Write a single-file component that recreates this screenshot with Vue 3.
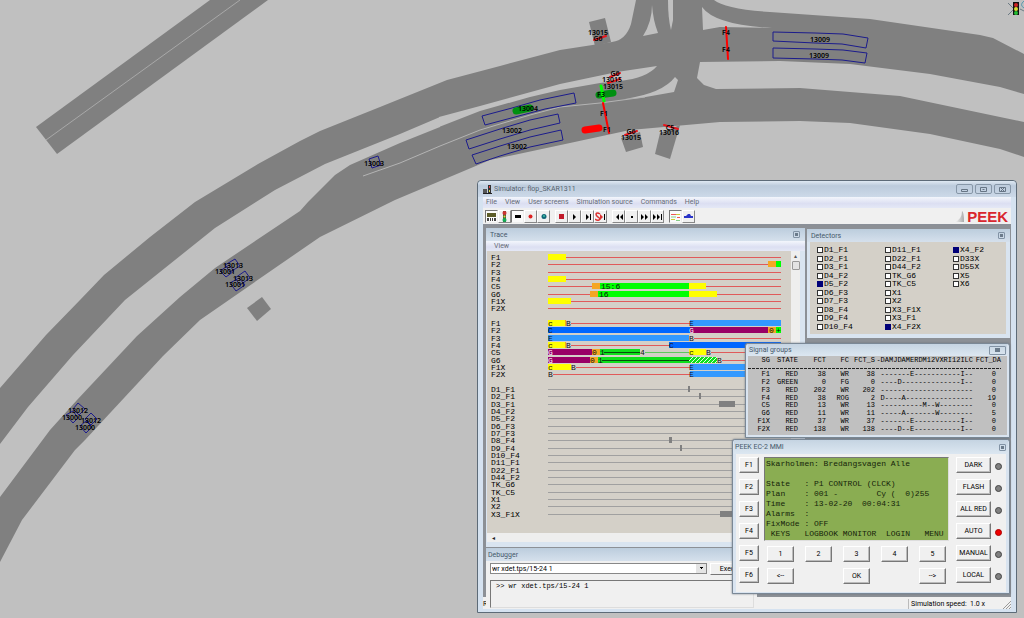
<script setup>
import { ref } from 'vue'

const menu = ['File', 'View', 'User screens', 'Simulation source', 'Commands', 'Help']

const tools = [
  [
    { id: 'panel', on: true },
    { id: 'lights' },
    { id: 'detector', on: true },
    { id: 'record' },
    { id: 'globe' }
  ],
  [{ id: 'stop' }, { id: 'play' }, { id: 'step' }, { id: 'skip' }],
  [{ id: 'rewind' }, { id: 'dot' }, { id: 'forward' }, { id: 'end' }],
  [{ id: 'trace', on: true }, { id: 'car' }]
]

const areas = [
  '773,32 815,33 843,34 868,38 866,48 842,44 815,43 773,41',
  '773,48 815,49 843,50 867,53 865,63 842,60 815,59 773,58',
  '482,116 512,108 540,100 574,93 576,103 545,109 515,117 485,125',
  '466,140 500,129 530,120 558,114 560,123 530,130 500,139 469,149',
  '472,155 500,146 530,137 561,130 563,140 530,147 500,156 476,164',
  '369,159 378,156 381,165 372,168',
  '225,265 235,259 240,266 230,272',
  '220,271 229,265 234,271 226,277',
  '235,278 245,271 250,278 240,285',
  '230,283 239,278 245,285 236,291',
  '73,409 78,403 85,409 79,415',
  '66,415 73,411 78,418 73,423',
  '85,419 91,413 97,419 91,425',
  '80,426 86,421 92,427 86,433'
]

const labels = [
  ['13009', 820, 42], ['13009', 819, 58], ['13015', 598, 35], ['13015', 612, 82],
  ['13015', 613, 89], ['13015', 631, 140], ['13016', 669, 135], ['13004', 528, 111],
  ['13002', 512, 133], ['13002', 517, 149], ['13003', 374, 166], ['13013', 233, 268],
  ['13001', 225, 274], ['13013', 243, 281], ['13001', 235, 287], ['13012', 78, 413],
  ['13000', 72, 420], ['13012', 91, 423], ['13000', 85, 430], ['G6', 598, 41],
  ['G6', 615, 76], ['G6', 631, 134], ['C5', 670, 130], ['F4', 726, 35],
  ['F4', 726, 52], ['F1', 604, 116], ['F1', 607, 132], ['F3', 601, 97]
]

// trace rows: bars are [from, to, colour], marks are [text, x, colour]
const Y = '#ffff00'
const O = '#f5a623'
const G = '#00ff00'
const DG = '#0de01b'
const M = '#990066'
const B1 = '#0066ff'
const B2 = '#3399ff'

const traceRows = [
  { name: 'F1', bars: [[61, 79, Y]] },
  { name: 'F2', bars: [[281, 289, O], [289, 294, G]] },
  { name: 'F3' },
  { name: 'F4', bars: [[61, 79, Y]] },
  { name: 'C5', bars: [[105, 113, O], [113, 202, G], [202, 219, Y]], marks: [['15:6', 114]] },
  { name: 'G6', bars: [[103, 111, O], [111, 202, G], [202, 230, Y]], marks: [['16', 112]] },
  { name: 'F1X', bars: [[61, 84, Y]] },
  { name: 'F2X' },
  null,
  { name: 'F1', bars: [[61, 78, Y], [78, 80, O], [203, 294, B2]], marks: [['c', 61], ['B', 79], ['E', 202]] },
  { name: 'F2', bars: [[61, 203, B1], [203, 281, M], [281, 289, O], [289, 294, G]], marks: [['C', 61], ['G', 202, '#fff'], ['0', 282], ['+', 289]] },
  { name: 'F3', bars: [[61, 202, B2]], marks: [['E', 61], ['B', 202]] },
  { name: 'F4', bars: [[61, 78, Y], [78, 80, O], [182, 294, B1]], marks: [['c', 61], ['B', 79], ['C', 182]] },
  { name: 'C5', bars: [[61, 105, M], [105, 113, O], [113, 153, DG], [202, 219, Y], [219, 221, O]], core: [117, 153], thin: [158, 202], marks: [['G', 61, '#fff'], ['0', 105], ['1', 113], ['4', 153], ['c', 202], ['B', 219]] },
  { name: 'G6', bars: [[61, 103, M], [103, 111, O], [111, 202, DG], [202, 230, 'url(#hatch)']], core: [115, 202], marks: [['G', 61, '#fff'], ['0', 103], ['1', 111], ['B', 230]] },
  { name: 'F1X', bars: [[61, 84, Y], [84, 86, O], [203, 294, B2]], marks: [['c', 61], ['B', 84], ['E', 202]] },
  { name: 'F2X', bars: [[203, 294, B2]], marks: [['B', 61], ['E', 202]] },
  null,
  { name: 'D1_F1', pulse: [201, 203] },
  { name: 'D2_F1', pulse: [212, 214] },
  { name: 'D3_F1', pulse: [232, 248] },
  { name: 'D4_F2', pulse: [] },
  { name: 'D5_F2', pulse: [] },
  { name: 'D6_F3', pulse: [] },
  { name: 'D7_F3', pulse: [] },
  { name: 'D8_F4', pulse: [182, 185] },
  { name: 'D9_F4', pulse: [193, 195] },
  { name: 'D10_F4', pulse: [] },
  { name: 'D11_F1', pulse: [] },
  { name: 'D22_F1', pulse: [] },
  { name: 'D44_F2', pulse: [] },
  { name: 'TK_G6', pulse: [] },
  { name: 'TK_C5', pulse: [] },
  { name: 'X1', pulse: [] },
  { name: 'X2', pulse: [] },
  { name: 'X3_F1X', pulse: [233, 260] }
]
  .map((row, i) => row && { ...row, y: Math.round((i * 22) / 3) + 6 })
  .filter(Boolean)

const detectors = ref(
  [
    'D1_F1', 'D2_F1', 'D3_F1', 'D4_F2', 'D5_F2', 'D6_F3', 'D7_F3', 'D8_F4', 'D9_F4', 'D10_F4',
    'D11_F1', 'D22_F1', 'D44_F2', 'TK_G6', 'TK_C5', 'X1', 'X2', 'X3_F1X', 'X3_F1', 'X4_F2X',
    'X4_F2', 'D33X', 'D55X', 'X5', 'X6'
  ].map(name => ({ name, on: ['D5_F2', 'X4_F2X', 'X4_F2'].includes(name) }))
)

const groups = [
  ['F1', 'RED', 38, 'WR', 38, '-------E-----------I--', 0],
  ['F2', 'GREEN', 0, 'FG', 0, '----D--------------I--', 0],
  ['F3', 'RED', 202, 'WR', 202, '----------------------', 0],
  ['F4', 'RED', 38, 'ROG', 2, 'D----A----------------', 19],
  ['C5', 'RED', 13, 'WR', 13, '----------M--W--------', 0],
  ['G6', 'RED', 11, 'WR', 11, '-----A-------W--------', 5],
  ['F1X', 'RED', 37, 'WR', 37, '-------E-----------I--', 0],
  ['F2X', 'RED', 138, 'WR', 138, '----D--E-----------I--', 0]
]

const lcd = [
  'Skarholmen: Bredangsvagen Alle',
  '',
  'State   : P1 CONTROL (CLCK)',
  'Plan    : 001 -        Cy (  0)255',
  'Time    : 13-02-20  00:04:31',
  'Alarms  :',
  'FixMode : OFF',
  ' KEYS   LOGBOOK MONITOR  LOGIN   MENU'
].join('\n')

const modes = ['DARK', 'FLASH', 'ALL RED', 'AUTO', 'MANUAL', 'LOCAL']
const command = ref('wr xdet.tps/15-24 1')
</script>

<template>
  <main class="desktop">
    <svg class="map" viewBox="0 0 1024 618" preserveAspectRatio="xMinYMin slice">
      <g fill="#808080">
        <polygon points="210,0 268,0 57,154 36,127" />
        <!-- outer carriageway -->
        <path d="M0,388 46,335 80,300 104,275 150,237 195,202 258,164 300,141 320,131 380,107 447,80 500,66 560,50 612,42 Q626,40 631,24 L636,0 714,0 Q725,9 770,12 L870,19 980,35 993,38 1024,54 1024,157 1000,149 930,134 850,123 800,121 720,122 630,130 570,143 490,160 395,200 320,237 275,268 200,320 163,356 85,440 75,450 22,520 0,562 V497 L50,430 77,400 137,336 180,297 215,268 300,211 308,202 335,175 350,165 400,143 440,127 440,117 400,134 325,164 275,190 215,228 125,300 73,355 28,407 0,444Z" />
        <polygon points="589,22 605,18 611,42 595,46" />
        <polygon points="621,138 640,132 643,147 626,152" />
        <polygon points="660,133 680,125 670,159 655,154" />
        <polygon points="247,308 262,297 271,309 257,321" />
      </g>
      <g fill="#c0c0c0">
        <path d="M439,117 480,106 560,84 617,72 657,66 Q647,78 620,81 L600,83 560,90 530,97 480,111 439,127Z" />
        <path d="M625,99 Q663,93 675,77 L678,80 674,92 640,98Z" />
        <path d="M700,62 780,61 850,64 930,74 1000,87 1024,94 1024,122 1000,117 900,96 800,88 716,89 704,85 697,78Z" />
        <path d="M702,7 Q715,25 772,28 L720,27 703,30Z" />
        <path d="M652,5 Q652,22 643,36 L658,33 Q653,20 652,5Z" />
        <path d="M668,0 H673 V20 L671,30 Q668,18 668,0Z" />
      </g>
      <path d="M240,0 46,140" stroke="#a8a8a8" fill="none" />
      <path d="M363,176 400,163 440,146 480,130 530,115 560,107 600,103 645,97" stroke="#b4b4b4" fill="none" />
      <polygon v-for="(a, i) in areas" :key="i" :points="a" fill="none" stroke="#1c1c8c" stroke-width="1" />
      <g fill="none" stroke-linecap="round">
        <path d="M516,111 530,108M599,95 613,93" stroke="#009010" stroke-width="7" />
        <path d="M585,130 599,128" stroke="#f00" stroke-width="7" />
        <path d="M601,86 604,101" stroke="#0f0" stroke-width="3" />
        <path d="M603,103 609,133M726,27 728,59" stroke="#f00" stroke-width="2" />
        <path d="M594,40 606,36M610,77 620,73M608,83 620,79M625,135 637,131M664,125 678,129" stroke="#e8141c" stroke-width="2" />
      </g>
      <text v-for="(l, i) in labels" :key="i" :x="l[1]" :y="l[2]" class="map-label">{{ l[0] }}</text>
      <g>
        <path d="M1008,3 1014,9M1014,9 1008,15M1020,9 1024,11" stroke="#6c7b84" stroke-width="1" />
        <path d="M1024,1 Q1019,5 1024,8" stroke="#5a98b0" fill="none" />
        <rect x="1013" y="2" width="6" height="13" fill="#111" />
        <circle cx="1016" cy="5" r="2" fill="#c22" />
        <circle cx="1016" cy="9" r="2" fill="#dd3" />
        <circle cx="1016" cy="13" r="2" fill="#2b3" />
      </g>
    </svg>

    <section class="simulator">
      <header class="title">
        <svg width="9" height="9" viewBox="0 0 9 9">
          <path d="M0,4h4v4h-4z" fill="#555" /><path d="M0,8h9v1H0z" fill="#222" /><path d="M5,0h3v8h-3z" fill="#333" /><path d="M6,1h1v2h-1z" fill="#e44" /><path d="M6,5h1v2h-1z" fill="#dd4" />
        </svg>
        <h1>Simulator: flop_SKAR1311</h1>
        <div class="controls">
          <button aria-label="Minimize"><svg viewBox="0 0 9 7"><path d="M1.500,3.500h6v2h-6z" /></svg></button>
          <button aria-label="Maximize"><svg viewBox="0 0 9 7"><path d="M1.500,1.500h6v4h-6zM3.500,3.500h2" /></svg></button>
          <button aria-label="Close"><svg viewBox="0 0 9 7"><path d="M1.500,1.500h6v4h-6zM3,2l3,3M6,2l-3,3" /></svg></button>
        </div>
      </header>
      <nav class="menu">
        <a v-for="m in menu" :key="m" href="#">{{ m }}</a>
      </nav>
      <div class="toolbar">
        <div v-for="(group, g) in tools" :key="g" class="tool-group">
          <button v-for="t in group" :key="t.id" :class="{ on: t.on }" :aria-label="t.id">
            <svg width="11" height="11" viewBox="0 0 11 11">
              <template v-if="t.id === 'panel'">
                <path d="M1,2h9v4h-9z" fill="#5c5c28" />
                <path d="M1,7h2v3h-2zM4,7h1v3h-1zM6,7h1v3h-1zM8,7h2v3h-2z" fill="#444" />
              </template>
              <template v-else-if="t.id === 'lights'">
                <path d="M4,0h3v11h-3z" fill="#4b5b3a" />
                <circle cx="5.500" cy="2" r="2" fill="#c33" /><circle cx="5.500" cy="5.500" r="1" fill="#dd3" /><circle cx="5.500" cy="9" r="2" fill="#1a5" />
              </template>
              <path v-else-if="t.id === 'detector'" d="M3,4h6v3h-6z" />
              <circle v-else-if="t.id === 'record'" cx="5.500" cy="5.500" r="2" fill="#d22" />
              <template v-else-if="t.id === 'globe'">
                <circle cx="6" cy="5.500" r="2.500" fill="#167" /><path d="M5,4h2v2h-2z" fill="#3a9" />
              </template>
              <path v-else-if="t.id === 'stop'" d="M3,3h5v5h-5z" fill="#c11a2a" />
              <path v-else-if="t.id === 'play'" d="M4,3l3,3-3,3z" />
              <path v-else-if="t.id === 'step'" d="M4,3l3,3-3,3zM8,3h1v6h-1z" />
              <template v-else-if="t.id === 'skip'">
                <path d="M5,3q-3,-2 -4,0q0,2 2,3q3,2 1,3q-2,1 -4,-1" fill="none" stroke="#d33" stroke-width="1.500" />
                <path d="M5,3l3,3-3,3z" fill="#d33" /><path d="M9,3h1v6h-1z" />
              </template>
              <path v-else-if="t.id === 'rewind'" d="M6,3v6l-3,-3zM10,3v6l-3,-3z" />
              <path v-else-if="t.id === 'dot'" d="M5,5h2v2h-2z" />
              <path v-else-if="t.id === 'forward'" d="M2,3l3,3-3,3zM6,3l3,3-3,3z" />
              <path v-else-if="t.id === 'end'" d="M1,3l3,3-3,3zM5,3l3,3-3,3zM9,3h1v6h-1z" />
              <template v-else-if="t.id === 'trace'">
                <path d="M1,3.500h5M7,6.500h3" stroke="#e55" /><path d="M6,3.500h4M1,8.500h4" stroke="#cc3" /><path d="M1,6h5M6,9.500h4" stroke="#8c8" />
              </template>
              <path v-else d="M1,7v-2h2l2,-2h2l1,2h2v2z" fill="#2a35c8" />
            </svg>
          </button>
        </div>
        <div class="brand">
          <svg width="10" height="12" viewBox="0 0 10 12">
            <defs>
              <linearGradient id="swoosh"><stop offset="0" stop-color="#fff" /><stop offset="1" stop-color="#aaa" /></linearGradient>
            </defs>
            <path d="M0,1H8Q10,2 10,12H0Q8,10 8,1z" fill="url(#swoosh)" />
          </svg>
          <strong>PEEK</strong>
        </div>
      </div>

      <div class="mdi">
        <section class="child trace">
          <header><h2>Trace</h2><button class="box" aria-label="Close trace"></button></header>
          <nav class="menu sub"><a href="#">View</a></nav>
          <div class="trace-body">
            <svg class="chart" width="300" height="282">
              <defs>
                <pattern id="hatch" width="4" height="4" patternUnits="userSpaceOnUse">
                  <rect width="4" height="4" fill="#0de01b" />
                  <path d="M-1,5 5,-1" stroke="#dfffdf" stroke-width="1" />
                </pattern>
              </defs>
              <g v-for="r in traceRows" :key="r.y">
                <text x="4" :y="r.y + 3">{{ r.name }}</text>
                <template v-if="r.pulse">
                  <rect x="61" :y="r.y" width="233" height="1" fill="#a0a0a0" />
                  <rect v-if="r.pulse.length" :x="r.pulse[0]" :y="r.y - 3" :width="r.pulse[1] - r.pulse[0]" height="6" fill="#808080" />
                </template>
                <template v-else>
                  <rect x="61" :y="r.y" width="233" height="1" fill="#e05a5a" />
                  <rect v-for="(b, i) in r.bars" :key="i" :x="b[0]" :y="r.y - 3" :width="b[1] - b[0]" height="6" :fill="b[2]" />
                  <rect v-if="r.core" :x="r.core[0]" :y="r.y" :width="r.core[1] - r.core[0]" height="1" fill="#0a4a10" />
                  <rect v-if="r.thin" :x="r.thin[0]" :y="r.y" :width="r.thin[1] - r.thin[0]" height="1" fill="#5fc85f" />
                  <template v-for="m in r.marks" :key="m[1]">
                    <rect v-if="m[0] === 'B' || m[0] === '4'" :x="m[1]" :y="r.y - 3" width="5" height="7" fill="#d4d0c8" />
                    <text :x="m[1]" :y="r.y + 3" :fill="m[2] || '#111'">{{ m[0] }}</text>
                  </template>
                </template>
              </g>
            </svg>
            <div class="vscroll"><i>▴</i><b></b></div>
          </div>
          <div class="hscroll">◂</div>
        </section>

        <section class="child detectors">
          <header><h2>Detectors</h2><button class="box" aria-label="Close detectors"></button></header>
          <div class="detector-list">
            <label v-for="d in detectors" :key="d.name"><input v-model="d.on" type="checkbox">{{ d.name }}</label>
          </div>
        </section>

        <section class="child debugger">
          <header><h2>Debugger</h2></header>
          <div class="command">
            <select v-model="command" aria-label="Command"><option>wr xdet.tps/15-24 1</option></select>
            <button>Execute</button>
          </div>
          <textarea readonly aria-label="Output" value="&gt;&gt; wr xdet.tps/15-24 1"></textarea>
        </section>

        <section class="child floating signals">
          <header><h2>Signal groups</h2><button class="box wide" aria-label="Close signal groups"></button></header>
          <div class="signal-body">
            <table>
              <thead>
                <tr><th>SG</th><th>STATE</th><th>FCT</th><th>FC</th><th>FCT_S</th><th>-DAMJDAMERDM12VXRI12ILC</th><th>FCT_DA</th></tr>
              </thead>
              <tbody>
                <tr v-for="g in groups" :key="g[0]"><td v-for="(c, i) in g" :key="i">{{ c }}</td></tr>
              </tbody>
            </table>
          </div>
        </section>

        <section class="child floating mmi">
          <header><h2>PEEK EC-2 MMI</h2><button class="box" aria-label="Close MMI"></button></header>
          <div class="mmi-body">
            <div class="keys">
              <button v-for="n in 6" :key="n">F{{ n }}</button>
            </div>
            <div class="center">
              <pre class="lcd">{{ lcd }}</pre>
              <div class="pad">
                <button v-for="n in 5" :key="n">{{ n }}</button>
                <button>&lt;--</button>
                <button class="ok">OK</button>
                <button class="next">--&gt;</button>
              </div>
            </div>
            <div class="modes">
              <template v-for="m in modes" :key="m">
                <button>{{ m }}</button>
                <i :class="{ lit: m === 'AUTO' }"></i>
              </template>
            </div>
          </div>
        </section>
      </div>

      <footer class="status">
        <span>Ready</span>
        <p>Simulation speed: &nbsp;1.0 x</p>
        <svg width="8" height="8" viewBox="0 0 8 8"><path d="M0,8 8,0M3,8 8,3M6,8 8,6" stroke="#999" /></svg>
      </footer>
    </section>
  </main>
</template>

<style>
body {
  background: #c0c0c0;
}
</style>

<style scoped>
* {
  box-sizing: border-box;
}

.desktop {
  position: relative;
  min-height: 100vh;
  overflow: hidden;
  background: #c0c0c0;
  font-family: Roboto, "Noto Sans", sans-serif;
  font-size: 7px;
  line-height: 10px;
  color: #222;
}

.map {
  position: absolute;
  inset: 0;
  width: 100%;
  height: 100%;
}

.map-label {
  font: 600 7px "Noto Sans", sans-serif;
  text-anchor: middle;
}

button {
  padding: 0;
  border: 0;
  font: inherit;
  color: inherit;
  background: none;
}

h1, h2, p {
  margin: 0;
  font-size: inherit;
  font-weight: 400;
}

a {
  color: inherit;
  text-decoration: none;
}

.simulator {
  position: absolute;
  top: 180px;
  right: 7px;
  bottom: 5px;
  left: 477px;
  display: flex;
  flex-direction: column;
  padding: 0 5px 3px;
  border: 1px solid #5d6b78;
  border-radius: 4px 4px 0 0;
  background: #d5e2f0;
}

.title {
  display: flex;
  align-items: center;
  gap: 2px;
  height: 16px;
  margin: 0 -5px;
  padding: 0 5px;
  border-radius: 4px 4px 0 0;
  background: linear-gradient(#dfe9f3, #bccbdc 30%, #ccd9e8);
}

.title h1 {
  color: #56646f;
}

.controls {
  display: flex;
  gap: 2px;
  margin-left: auto;
}

.controls button {
  display: grid;
  place-items: center;
  width: 17px;
  height: 10px;
  border: 1px solid #8797a8;
  border-radius: 2px;
}

.controls svg {
  width: 9px;
  height: 7px;
  fill: none;
  stroke: #667585;
}

.menu {
  display: flex;
  gap: 8px;
  height: 11px;
  padding: 0 3px;
  color: #666c78;
  background: linear-gradient(#f3f6fc, #dcdff2 60%, #e4e8f6);
}

.toolbar {
  display: flex;
  align-items: center;
  gap: 5px;
  height: 17px;
  padding: 0 3px 0 2px;
  border-bottom: 1px solid #8a9099;
  background: #f0f0f0;
}

.tool-group {
  display: flex;
}

.tool-group button {
  width: 13px;
  height: 13px;
  border: 1px solid;
  border-color: #fff #888 #888 #fff;
}

.tool-group button.on {
  border-color: #777 #eee #eee #777;
  background: #fafafa;
}

.tool-group svg {
  display: block;
}

.brand {
  display: flex;
  align-items: center;
  gap: 3px;
  margin-left: auto;
}

.brand strong {
  font: 700 15px/15px "Liberation Sans", sans-serif;
  color: #d9262e;
}

.mdi {
  position: relative;
  flex: 1;
  background: #8c9096;
}

.child {
  position: absolute;
  display: flex;
  flex-direction: column;
  background: #d9e4f0;
}

.child header {
  display: flex;
  align-items: center;
  justify-content: space-between;
  flex: none;
  height: 13px;
  padding: 0 5px 0 4px;
  color: #45586a;
  background: linear-gradient(#bccddd, #d5e0ec);
}

.box {
  width: 7px;
  height: 7px;
  border: 1px solid #8293a5;
  border-radius: 1px;
  background: linear-gradient(#6b7b8b, #6b7b8b) center / 3px 3px no-repeat;
}

.box.wide {
  width: 17px;
  height: 9px;
  background-size: 5px 4px;
}

.trace {
  top: 3px;
  left: 3px;
  width: 319px;
  height: 319px;
}

.trace .sub {
  height: 10px;
  padding-left: 8px;
}

.trace-body {
  display: flex;
  justify-content: space-between;
  margin: 0 5px 0 1px;
  background: #d4d0c8;
}

.chart text {
  font: 8px "Liberation Mono", monospace;
}

.vscroll {
  display: flex;
  flex-direction: column;
  align-items: center;
  width: 9px;
  color: #555;
  background: #eee;
}

.vscroll i {
  font: 6px/10px "DejaVu Sans", sans-serif;
}

.vscroll b {
  width: 8px;
  height: 9px;
  border: 1px solid #999;
  border-radius: 1px;
  background: #e3e3e3;
}

.hscroll {
  height: 9px;
  margin: 0 5px 0 1px;
  padding-left: 5px;
  font: 6px/9px "DejaVu Sans", sans-serif;
  background: #eee;
}

.detectors {
  top: 4px;
  right: 1px;
  width: 203px;
  height: 109px;
}

.detector-list {
  display: grid;
  grid-template-rows: repeat(10, 1fr);
  grid-auto-columns: 68px;
  grid-auto-flow: column;
  flex: 1;
  margin: 0 4px 4px 3px;
  padding: 4px 0 3px 7px;
  background: #d4d0c8;
}

.detector-list label {
  display: flex;
  align-items: center;
  gap: 1px;
  font: 8px/8px "Liberation Mono", monospace;
  color: #000;
}

.detector-list input {
  appearance: none;
  width: 6px;
  height: 6px;
  margin: 0;
  border: 1px solid #333;
  background: #fff;
}

.detector-list input:checked {
  background: #000078;
  border-color: #000078;
}

.debugger {
  top: 323px;
  left: 3px;
  width: 271px;
  height: 61px;
  padding: 0 3px 0 0;
  background: #f0f0f0;
}

.debugger header {
  margin-right: -3px;
  padding-left: 2px;
}

.command {
  display: flex;
  gap: 3px;
  margin: 2px 0 0 4px;
}

.command select {
  appearance: none;
  width: 218px;
  height: 11px;
  padding: 0 1px;
  border: 1px solid #888;
  border-radius: 0;
  font: 7px Roboto, sans-serif;
  color: #000;
  background: conic-gradient(from -45deg at 50% 100%, #000 90deg, #e4e4e4 0) right 3px top 3px / 4px 2px no-repeat, linear-gradient(#e4e4e4, #e4e4e4) right / 10px 9px no-repeat, #fff;
}

.command button {
  width: 44px;
  border: 1px solid;
  border-color: #fff #777 #777 #fff;
  color: #000;
}

.debugger textarea {
  flex: 1;
  margin: 5px 0 1px 4px;
  padding: 1px 5px;
  border: 1px solid;
  border-color: #777 #ddd #ddd #777;
  resize: none;
  overflow: hidden;
  font: 7px/8px "Liberation Mono", monospace;
  color: #000;
  background: #f0f0f0;
}

.floating {
  border: 1px solid #7a8896;
  border-radius: 3px 3px 0 0;
  box-shadow: 0 0 2px #66707a;
}

.signals {
  top: 118px;
  right: 1px;
  width: 265px;
  height: 95px;
  padding: 0 2px 2px;
}

.floating header {
  background: linear-gradient(#c5d4e2, #dce7f1);
}

.signals header {
  height: 12px;
  padding: 0 1px;
}

.signal-body {
  flex: 1;
  background: #c0c0c0;
}

.signals table {
  width: 253px;
  height: 77px;
  table-layout: fixed;
  border-collapse: collapse;
  font: 7px/7px "Liberation Mono", monospace;
  color: #000;
}

.signals th,
.signals td {
  padding: 0;
  font-weight: 400;
  text-align: right;
  white-space: nowrap;
}

.signals thead tr {
  height: 15px;
  background: repeating-linear-gradient(90deg, #222 0, #222 3px, #c0c0c0 3px, #c0c0c0 4px) left 0 top 12px / 100% 1px no-repeat;
}

.signals th {
  padding: 1px 0 7px;
}

.signals th:nth-child(1) { width: 22px; }
.signals th:nth-child(2) { width: 28px; }
.signals th:nth-child(3) { width: 28px; }
.signals th:nth-child(4) { width: 23px; }
.signals th:nth-child(5) { width: 26px; }
.signals th:nth-child(6) { width: 98px; }

.signals td:last-child {
  padding-right: 5px;
}

.mmi {
  top: 214px;
  right: 1px;
  width: 278px;
  height: 155px;
  padding: 0 3px 3px;
}

.mmi header {
  height: 14px;
  margin: 0 -2px;
  padding: 0 2px 0 1px;
}

.mmi-body {
  display: flex;
  gap: 5px;
  flex: 1;
  padding: 3px;
  background: #f0f0f0;
}

.mmi-body button {
  height: 16px;
  border: 1px solid;
  border-color: #fff #777 #777 #fff;
  color: #000;
  box-shadow: inset -1px -1px #bbb;
}

.keys,
.modes {
  display: grid;
  grid-auto-rows: 22px;
  align-content: start;
}

.keys {
  width: 20px;
}

.center {
  width: 185px;
}

.lcd {
  height: 84px;
  margin: 0 0 5px;
  padding: 1px;
  border: 1px solid;
  border-color: #777 #ddd #ddd #777;
  font: 8px/10px "Liberation Mono", monospace;
  color: #15240a;
  background: #8aad52;
}

.pad {
  display: grid;
  grid-template-columns: repeat(5, 27px);
  grid-auto-rows: 16px;
  gap: 6px 11px;
  padding-left: 3px;
}

.ok {
  grid-column: 3;
}

.next {
  grid-column: 5;
}

.modes {
  grid-template-columns: 35px 7px;
  column-gap: 4px;
  margin-left: 2px;
}

.modes i {
  width: 7px;
  height: 7px;
  margin-top: 6px;
  border: 1px solid #444;
  border-radius: 50%;
  background: #808080;
}

.modes i.lit {
  border-color: #a00;
  background: #f00000;
}

.status {
  display: flex;
  align-items: flex-end;
  height: 12px;
  background: #f0f0f0;
  color: #000;
}

.status p {
  margin-left: auto;
  padding: 0 18px 0 2px;
  border-left: 1px solid #bbb;
}
</style>
